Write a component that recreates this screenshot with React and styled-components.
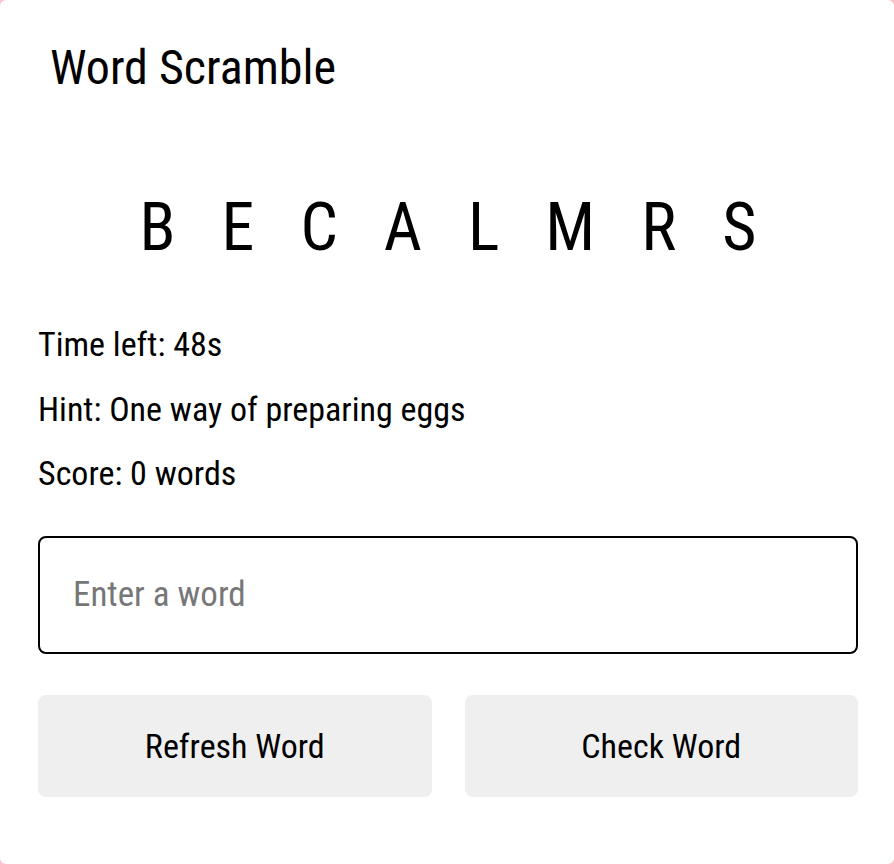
import styled, { createGlobalStyle } from "styled-components"

const GlobalStyle = createGlobalStyle`
  * { box-sizing: border-box; }
  body {
    margin: 0;
    background: #ffc0cb;
    font-family: "Roboto Condensed", "Liberation Sans", sans-serif;
  }
`

const Card = styled.div`
  width: 100vw;
  height: 100vh;
  background: #fff;
  border-radius: 6px;
  padding: 0 36px 0 38px;
  overflow: hidden;
`

const Title = styled.h1`
  margin: 0;
  padding: 38px 0 0 12px;
  font-size: 48px;
  font-weight: 400;
  line-height: 60px;
  color: #000;
`

const Letters = styled.div`
  margin-top: 94px;
  text-align: center;
  font-size: 66px;
  line-height: 72px;
  letter-spacing: 46px;
  padding-left: 46px;
  color: #000;
`

const InfoBlock = styled.div`
  margin-top: 48px;
`

const Info = styled.p`
  margin: 0;
  font-size: 34px;
  line-height: 64.5px;
  color: #000;
`

const Input = styled.input`
  display: block;
  width: 100%;
  height: 118px;
  margin-top: 30px;
  padding: 0 33px;
  border: 2px solid #000;
  border-radius: 8px;
  font-family: inherit;
  font-size: 35px;
  color: #000;
  outline: none;

  &::placeholder {
    color: #777;
  }
`

const Buttons = styled.div`
  display: grid;
  grid-template-columns: 1fr 1fr;
  gap: 33px;
  margin-top: 41px;
`

const Button = styled.button`
  height: 102px;
  border: none;
  border-radius: 8px;
  background: #efefef;
  font-family: inherit;
  font-size: 34px;
  color: #000;
  cursor: pointer;
`

const App = () => {
  return (
    <>
      <GlobalStyle />
      <Card>
        <Title>Word Scramble</Title>
        <Letters>BECALMRS</Letters>
        <InfoBlock>
          <Info>Time left: 48s</Info>
          <Info>Hint: One way of preparing eggs</Info>
          <Info>Score: 0 words</Info>
        </InfoBlock>
        <Input type="text" placeholder="Enter a word" />
        <Buttons>
          <Button>Refresh Word</Button>
          <Button>Check Word</Button>
        </Buttons>
      </Card>
    </>
  )
}

export default App
